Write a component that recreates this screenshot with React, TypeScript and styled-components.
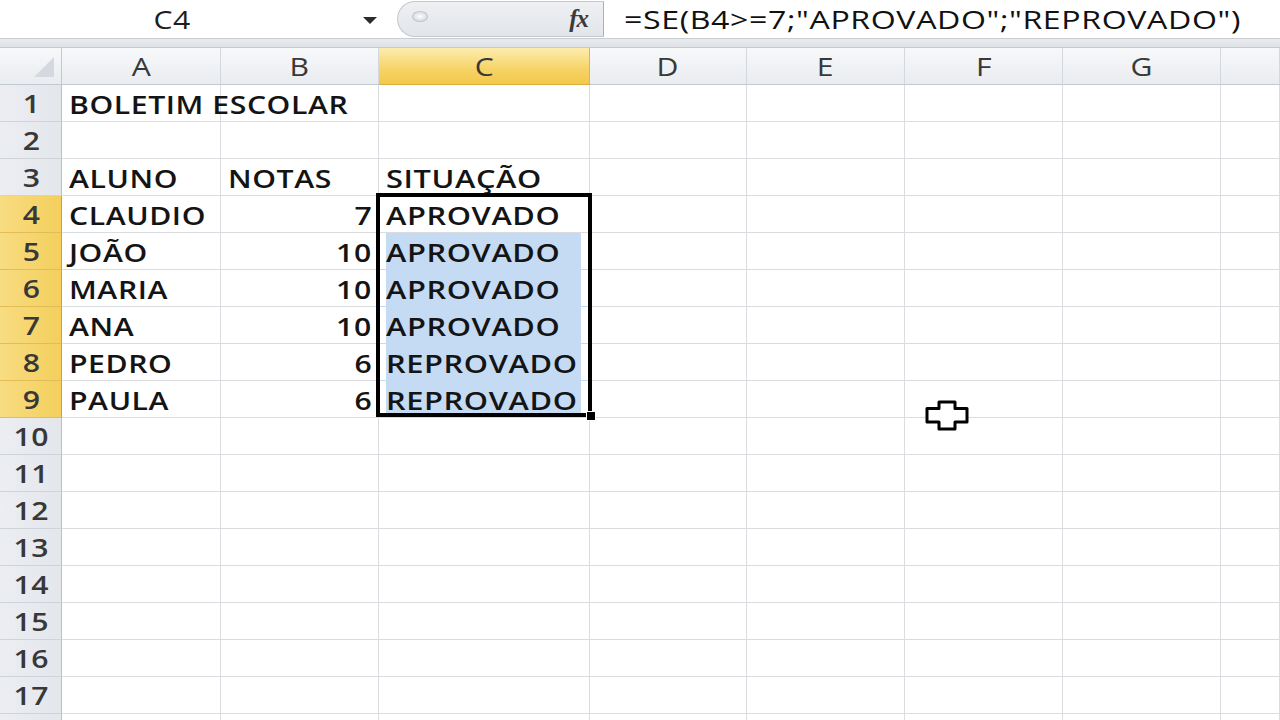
import React from "react";
import styled, { createGlobalStyle, css } from "styled-components";

const GlobalStyle = createGlobalStyle`
  html, body { margin: 0; padding: 0; background: #fff; }
  body { font-family: "Open Sans", Lato, "Liberation Sans", sans-serif; }
`;

const TEXT = css`
  font-family: "Open Sans", Lato, "Liberation Sans", sans-serif;
  font-size: 26px;
  font-weight: 600;
  letter-spacing: 0.5px;
`;

/* The reference is a horizontally stretched screen capture: widen glyphs. */
const Txt = styled.span<{ $origin?: "left" | "right" | "center"; $scale?: number }>`
  display: inline-block;
  white-space: nowrap;
  transform: scaleX(${(p) => p.$scale ?? 1.16});
  transform-origin: ${(p) => p.$origin ?? "left"} center;
`;

const Page = styled.div`
  position: relative;
  width: 1280px;
  height: 720px;
  overflow: hidden;
  background: #fff;
`;

const FormulaBar = styled.div`
  display: flex;
  align-items: stretch;
  height: 38px;
  background: #fff;
  border-bottom: 1px solid #c9cdd3;
`;

const NameBox = styled.div`
  display: flex;
  align-items: center;
  ${TEXT}
  font-weight: 500;
  color: #1e1e1e;
`;

const NameText = styled.span`
  width: 345px;
  text-align: center;
`;

const DropArrow = styled.span`
  width: 0;
  height: 0;
  border-left: 7px solid transparent;
  border-right: 7px solid transparent;
  border-top: 7px solid #2b2b2b;
  margin-left: 18px;
  margin-top: 3px;
`;

const Pill = styled.div`
  position: relative;
  margin-left: 20px;
  width: 205px;
  display: flex;
  align-items: center;
  justify-content: flex-end;
  background: linear-gradient(#eef0f3, #e2e5ea);
  border: 1px solid #c3c8cf;
  border-right: 1px solid #aab0b8;
  border-radius: 20px 0 0 20px;
  margin-top: 1px;
  margin-bottom: 1px;
`;

const Grip = styled.span`
  position: absolute;
  left: 14px;
  top: 9px;
  width: 14px;
  height: 9px;
  border-radius: 50%;
  background: radial-gradient(#fff, #c9ced5);
  border: 1px solid #c0c5cc;
`;

const Fx = styled.span`
  font-family: "Liberation Serif", serif;
  font-style: italic;
  font-weight: bold;
  font-size: 25px;
  color: #3a3a3a;
  margin-right: 15px;
  letter-spacing: -1px;
`;

const FormulaText = styled.div`
  flex: 1;
  display: flex;
  align-items: center;
  padding-left: 20px;
  ${TEXT}
  font-weight: 500;
  color: #111;
  white-space: nowrap;
`;

const Band = styled.div`
  height: 8px;
  background: linear-gradient(#e9ebee, #dfe2e6);
  border-bottom: 1px solid #c4c9d0;
`;

const COLS = [62, 159, 158, 211, 157, 158, 158, 158, 59];

const Grid = styled.div`
  position: relative;
  display: grid;
  grid-template-columns: ${COLS.map((c) => c + "px").join(" ")};
  grid-auto-rows: 37px;
`;

const headerBase = css`
  display: flex;
  align-items: center;
  justify-content: center;
  ${TEXT}
  color: #383838;
  box-sizing: border-box;
`;

const ColHeader = styled.div<{ $active?: boolean }>`
  ${headerBase}
  font-weight: 500;
  background: ${(p) =>
    p.$active
      ? "linear-gradient(#fcecae, #f6d366 60%, #f3c94c)"
      : "linear-gradient(#f7f8fa, #e9ecf0)"};
  border-right: 1px solid ${(p) => (p.$active ? "#dcb450" : "#d3d8de")};
  border-bottom: 1px solid ${(p) => (p.$active ? "#d9ad3c" : "#c3c9d1")};
`;

const Corner = styled.div`
  position: relative;
  background: linear-gradient(#f7f8fa, #e9ecf0);
  border-right: 1px solid #c3c9d1;
  border-bottom: 1px solid #c3c9d1;
  box-sizing: border-box;
  &::after {
    content: "";
    position: absolute;
    right: 7px;
    bottom: 7px;
    width: 0;
    height: 0;
    border-left: 20px solid transparent;
    border-bottom: 20px solid #d5d9df;
  }
`;

const RowHeader = styled.div<{ $active?: boolean }>`
  ${headerBase}
  background: ${(p) =>
    p.$active ? "linear-gradient(90deg, #f8dc82, #f4cf5c)" : "linear-gradient(90deg, #eceef2, #e3e6eb)"};
  border-right: 1px solid ${(p) => (p.$active ? "#c9a23a" : "#b9c0c9")};
  border-bottom: 1px solid ${(p) => (p.$active ? "#e2bc55" : "#cfd4db")};
  padding-left: 2px;
`;

const Cell = styled.div<{ $align?: "left" | "right"; $sel?: boolean }>`
  display: flex;
  align-items: center;
  justify-content: ${(p) => (p.$align === "right" ? "flex-end" : "flex-start")};
  padding: 1px 6px 0 7px;
  ${TEXT}
  color: #141414;
  white-space: nowrap;
  overflow: visible;
  box-sizing: border-box;
  border-right: 1px solid #dadcdf;
  border-bottom: 1px solid #dadcdf;
  ${(p) =>
    p.$sel &&
    css`
      background: #c5dbf4;
      border-bottom-color: #c5dbf4;
      box-shadow: inset 7px 0 0 #fff, inset -8px 0 0 #fff;
    `}
`;

const Selection = styled.div`
  position: absolute;
  left: 376px;
  top: 145px;
  width: 216px;
  height: 224px;
  border: 4px solid #000;
  box-sizing: border-box;
  pointer-events: none;
`;

const FillHandle = styled.div`
  position: absolute;
  right: -8px;
  bottom: -8px;
  width: 8px;
  height: 8px;
  background: #000;
  border: 1px solid #fff;
`;

const Cursor = styled.svg`
  position: absolute;
  left: 925px;
  top: 400px;
`;

type Row = { a?: string; b?: string; c?: string };

const rows: Row[] = [
  { a: "BOLETIM ESCOLAR" },
  {},
  { a: "ALUNO", b: "NOTAS", c: "SITUAÇÃO" },
  { a: "CLAUDIO", b: "7", c: "APROVADO" },
  { a: "JOÃO", b: "10", c: "APROVADO" },
  { a: "MARIA", b: "10", c: "APROVADO" },
  { a: "ANA", b: "10", c: "APROVADO" },
  { a: "PEDRO", b: "6", c: "REPROVADO" },
  { a: "PAULA", b: "6", c: "REPROVADO" },
];

const letters = ["A", "B", "C", "D", "E", "F", "G", ""];

export default function App() {
  const all: Row[] = [...rows];
  while (all.length < 17) all.push({});
  return (
    <Page>
      <GlobalStyle />
      <FormulaBar>
        <NameBox>
          <NameText>
            <Txt $origin="center">C4</Txt>
          </NameText>
          <DropArrow />
        </NameBox>
        <Pill>
          <Grip />
          <Fx>fx</Fx>
        </Pill>
        <FormulaText>
          <Txt $scale={1.235}>=SE(B4&gt;=7;"APROVADO";"REPROVADO")</Txt>
        </FormulaText>
      </FormulaBar>
      <Band />
      <Grid>
        <Corner />
        {letters.map((l, i) => (
          <ColHeader key={i} $active={l === "C"}>
            {l && <Txt $origin="center">{l}</Txt>}
          </ColHeader>
        ))}
        {all.map((r, i) => {
          const n = i + 1;
          const active = n >= 4 && n <= 9;
          return (
            <React.Fragment key={n}>
              <RowHeader $active={active}>
                <Txt $origin="center">{n}</Txt>
              </RowHeader>
              <Cell>{r.a && <Txt>{r.a}</Txt>}</Cell>
              <Cell $align={active ? "right" : "left"}>
                {r.b && <Txt $origin={active ? "right" : "left"}>{r.b}</Txt>}
              </Cell>
              <Cell $sel={n >= 5 && n <= 9}>
                {r.c && <Txt $scale={1.185}>{r.c}</Txt>}
              </Cell>
              <Cell />
              <Cell />
              <Cell />
              <Cell />
              <Cell />
            </React.Fragment>
          );
        })}
        <RowHeader />
        {COLS.slice(1).map((_, i) => (
          <Cell key={"f" + i} />
        ))}
        <Selection>
          <FillHandle />
        </Selection>
      </Grid>
      <Cursor width="44" height="31" viewBox="0 0 44 31">
        <path
          d="M14 2 H30 V8.5 H42 V22 H30 V29 H14 V22 H2 V8.5 H14 Z"
          fill="#fff"
          stroke="#000"
          strokeWidth="3"
          strokeLinejoin="round"
        />
      </Cursor>
    </Page>
  );
}
